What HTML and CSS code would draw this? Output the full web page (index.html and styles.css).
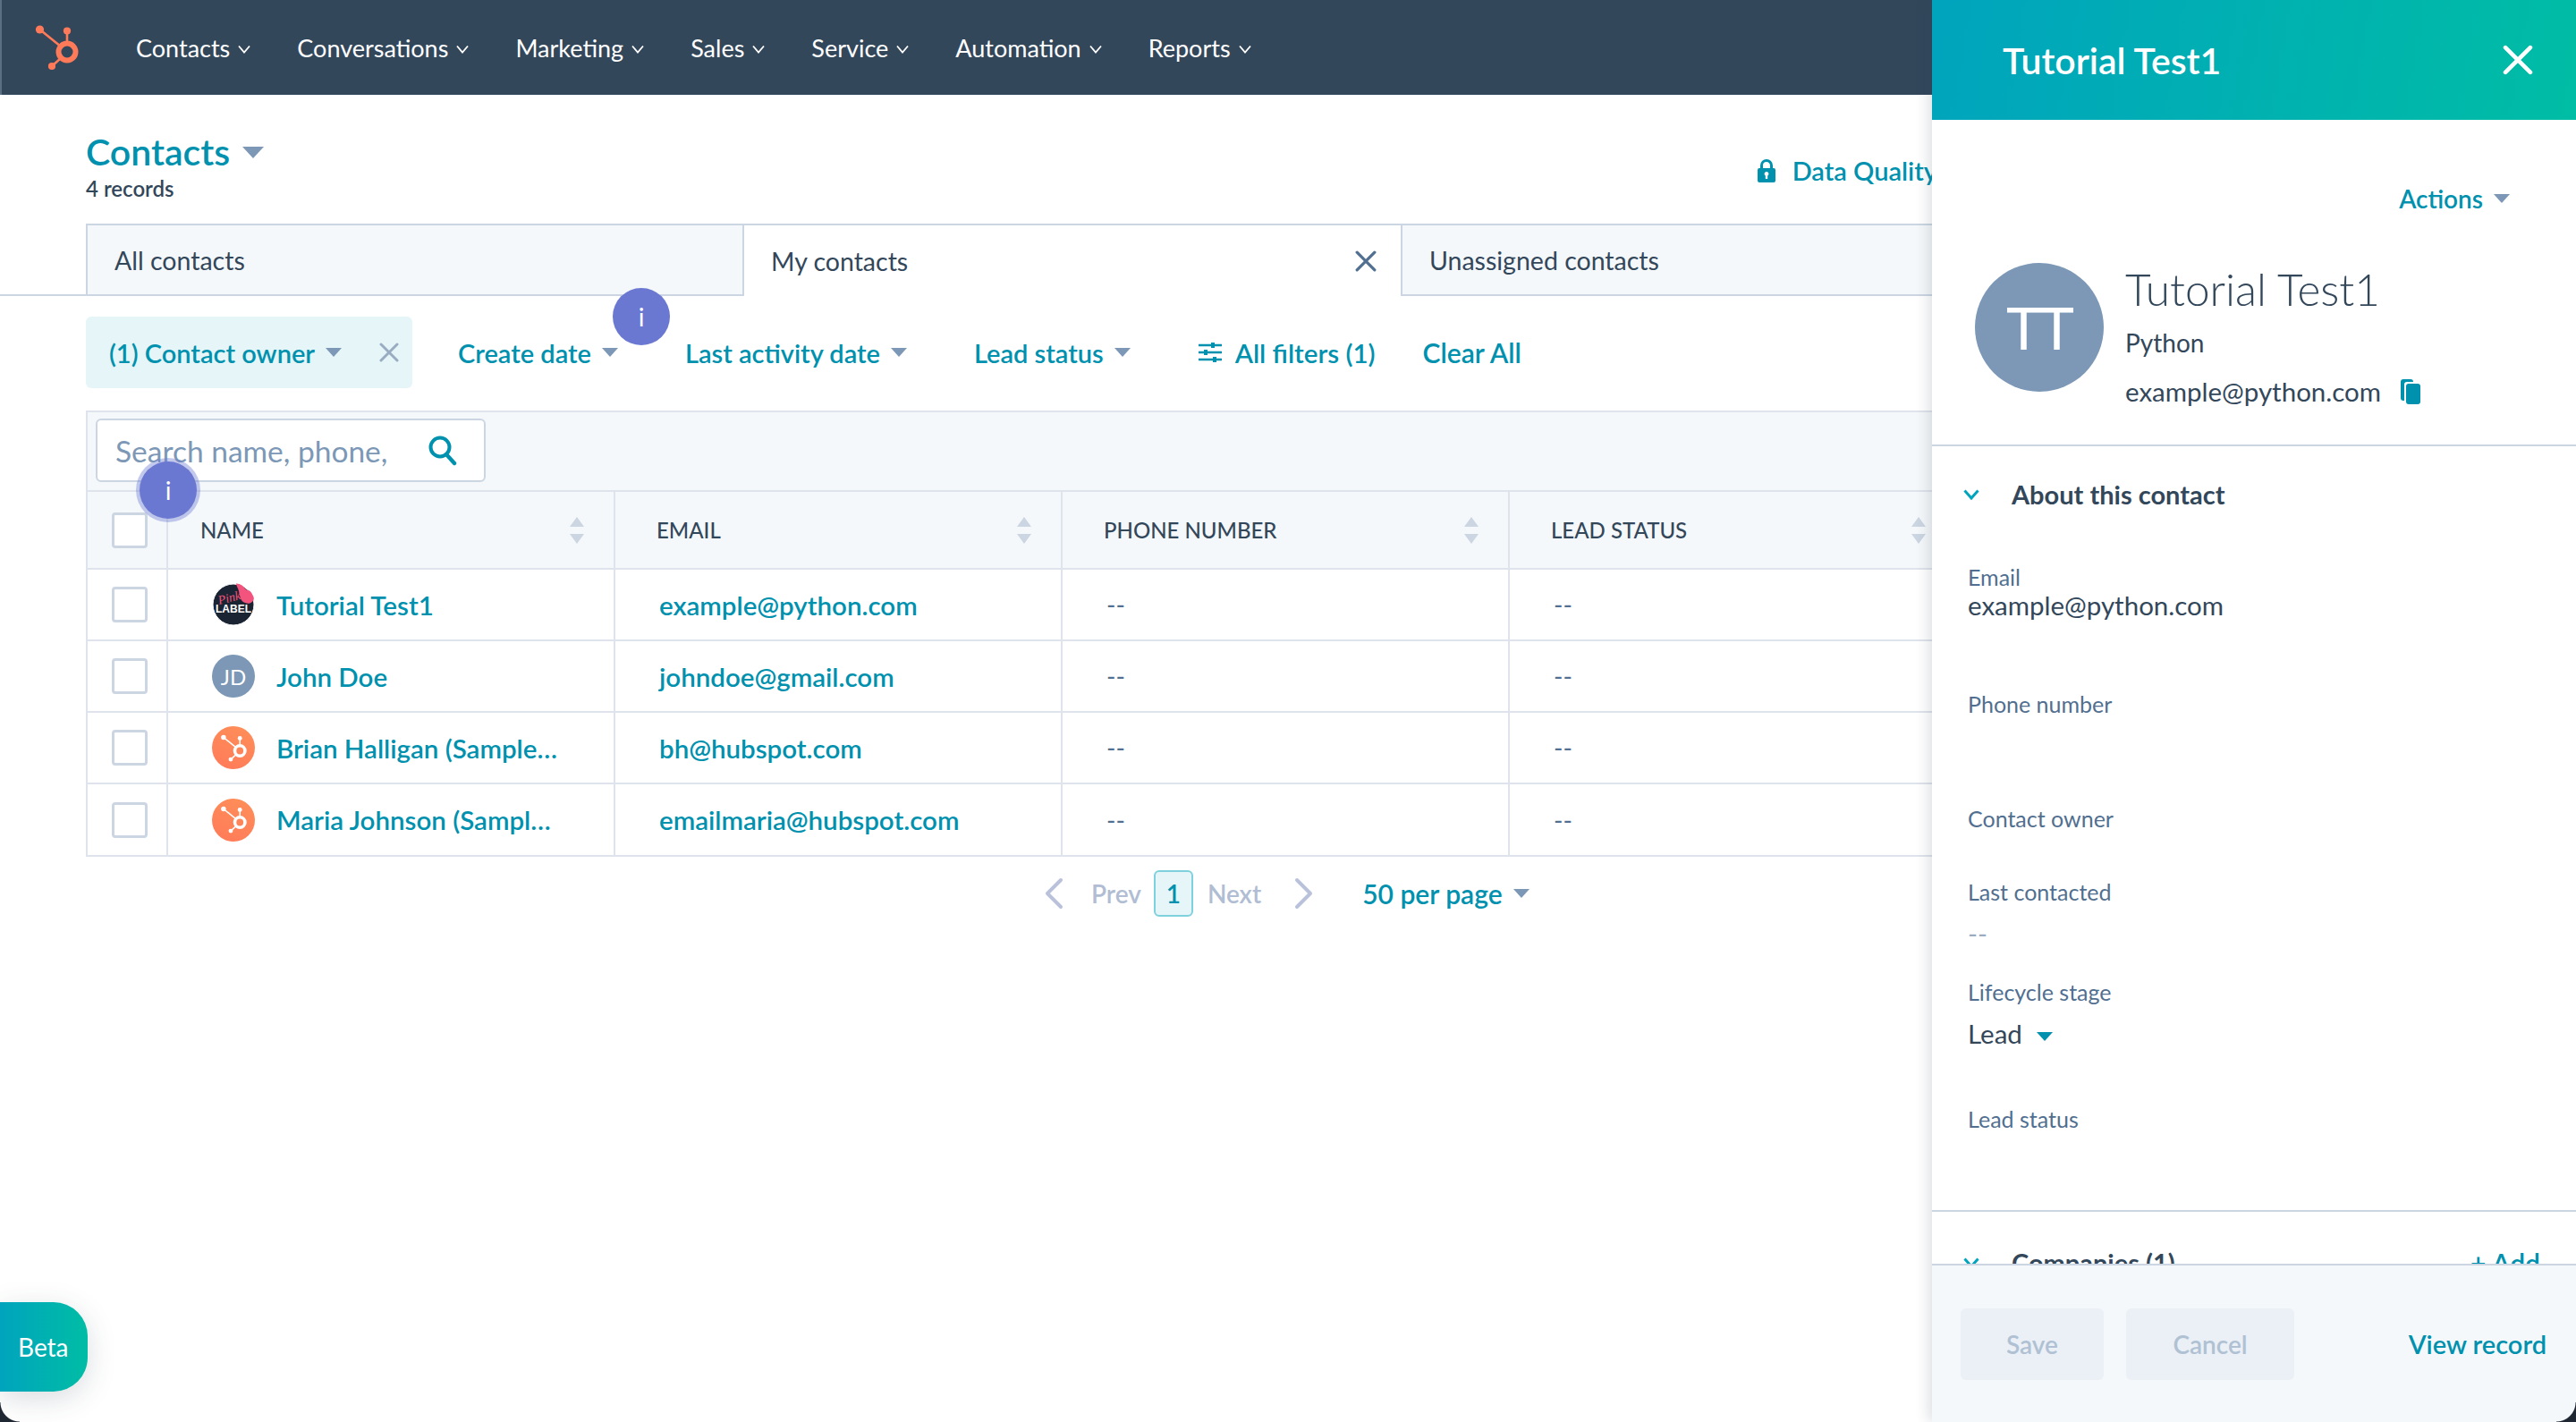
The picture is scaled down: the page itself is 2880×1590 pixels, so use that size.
FILE: index.html
```html
<!DOCTYPE html>
<html lang="en">
<head>
    <meta charset="UTF-8">
    <title>Contacts</title>
    <link rel="stylesheet" href="styles.css">
</head>
<body>
    <svg class="icon-defs" xmlns="http://www.w3.org/2000/svg">
        <symbol id="sprocket" viewBox="38 28 50 54">
            <circle cx="75" cy="60" r="9.5" fill="none" stroke="currentColor" stroke-width="6"/>
            <circle cx="44.5" cy="35" r="4.6" fill="currentColor"/>
            <circle cx="75" cy="36.5" r="4.1" fill="currentColor"/>
            <circle cx="58" cy="76" r="4.1" fill="currentColor"/>
            <path d="M44.5 35 L68 54 M75 36.5 V52 M58 76 L68 67" fill="none" stroke="currentColor" stroke-width="2.6"/>
        </symbol>
        <symbol id="chevron" viewBox="0 0 14 10">
            <path d="M1 1.5 L7 8.5 L13 1.5" fill="none" stroke="currentColor" stroke-width="1.8"/>
        </symbol>
        <symbol id="chevron-bold" viewBox="0 0 18 12">
            <path d="M1.5 1.5 L9 10 L16.5 1.5" fill="none" stroke="currentColor" stroke-width="3"/>
        </symbol>
        <symbol id="close" viewBox="0 0 22 22">
            <path d="M2 2 L20 20 M20 2 L2 20" fill="none" stroke="currentColor" stroke-width="3" stroke-linecap="round"/>
        </symbol>
        <symbol id="sort" viewBox="0 0 16 30">
            <path d="M8 0 L16 11 H0 Z M0 19 H16 L8 30 Z" fill="currentColor"/>
        </symbol>
    </svg>

    <div class="window">
        <nav class="topnav">
            <svg class="nav-logo"><use href="#sprocket"/></svg>
            <a class="nav-item">Contacts<svg class="nav-chevron"><use href="#chevron"/></svg></a>
            <a class="nav-item">Conversations<svg class="nav-chevron"><use href="#chevron"/></svg></a>
            <a class="nav-item">Marketing<svg class="nav-chevron"><use href="#chevron"/></svg></a>
            <a class="nav-item">Sales<svg class="nav-chevron"><use href="#chevron"/></svg></a>
            <a class="nav-item">Service<svg class="nav-chevron"><use href="#chevron"/></svg></a>
            <a class="nav-item">Automation<svg class="nav-chevron"><use href="#chevron"/></svg></a>
            <a class="nav-item">Reports<svg class="nav-chevron"><use href="#chevron"/></svg></a>
        </nav>

        <header class="page-head">
            <div>
                <h1 class="page-title">Contacts<span class="caret caret-lg"></span></h1>
                <div class="record-count">4 records</div>
            </div>
            <a class="data-quality">
                <svg class="lock-icon" viewBox="0 0 20 26">
                    <path d="M4.5 11 V7 a5.5 5.5 0 0 1 11 0 V11" fill="none" stroke="currentColor" stroke-width="3"/>
                    <path d="M2 10 H18 a2 2 0 0 1 2 2 V24 a2 2 0 0 1 -2 2 H2 a2 2 0 0 1 -2 -2 V12 a2 2 0 0 1 2 -2 Z M10 14 a2.4 2.4 0 0 0 -1.2 4.5 V22 H11.2 V18.5 A2.4 2.4 0 0 0 10 14 Z" fill="currentColor" fill-rule="evenodd"/>
                </svg>
                Data Quality
            </a>
        </header>

        <div class="view-tabs">
            <div class="view-tab">All contacts</div>
            <div class="view-tab view-tab-active">My contacts<svg class="tab-close"><use href="#close"/></svg></div>
            <div class="view-tab">Unassigned contacts</div>
        </div>

        <div class="filter-bar">
            <div class="filter-chip">(1) Contact owner<span class="caret"></span><svg class="chip-close"><use href="#close"/></svg></div>
            <a class="filter-item">Create date<span class="caret"></span></a>
            <a class="filter-item">Last activity date<span class="caret"></span></a>
            <a class="filter-item">Lead status<span class="caret"></span></a>
            <a class="filter-item filter-all">
                <svg class="sliders-icon" viewBox="0 0 26 24">
                    <path d="M0 4 H26 M0 12 H26 M0 20 H26" stroke="currentColor" stroke-width="2.4"/>
                    <path d="M14 1 H18 V7 H14 Z M6 9 H10 V15 H6 Z M16 17 H20 V23 H16 Z" fill="currentColor"/>
                </svg>
                All filters (1)
            </a>
            <a class="filter-item filter-clear">Clear All</a>
        </div>

        <section class="contacts-table-wrap">
            <div class="table-toolbar">
                <div class="search-box">
                    <span class="search-text">Search name, phone,</span>
                    <svg class="search-icon" viewBox="0 0 32 34">
                        <circle cx="13" cy="13" r="10.5" fill="none" stroke="currentColor" stroke-width="4"/>
                        <path d="M20 21 L29 31" stroke="currentColor" stroke-width="4.4" stroke-linecap="round"/>
                    </svg>
                </div>
            </div>
            <table class="contacts-table">
                <thead>
                    <tr>
                        <th class="col-check"><span class="checkbox"></span></th>
                        <th class="col-name">NAME<svg class="sort-icon"><use href="#sort"/></svg></th>
                        <th>EMAIL<svg class="sort-icon"><use href="#sort"/></svg></th>
                        <th>PHONE NUMBER<svg class="sort-icon"><use href="#sort"/></svg></th>
                        <th>LEAD STATUS<svg class="sort-icon"><use href="#sort"/></svg></th>
                    </tr>
                </thead>
                <tbody>
                    <tr>
                        <td class="col-check"><span class="checkbox"></span></td>
                        <td>
                            <div class="name-cell">
                                <svg class="avatar" viewBox="0 0 48 48">
                                    <circle cx="24" cy="24" r="23" fill="#1b2433" stroke="#ffffff" stroke-width="1"/>
                                    <path d="M27 0 C34 1 36 5 39 8 C45 8 48 12 47 17 C46 22 41 24 37 22 C32 21 31 14 30 9 C29 5 27 3 27 0 Z" fill="#f2547d"/>
                                    <text class="logo-script" x="8" y="24" transform="rotate(-14 8 24)">Pink</text>
                                    <text class="logo-label" x="24" y="33">LABEL</text>
                                </svg>
                                <a class="row-link">Tutorial Test1</a>
                            </div>
                        </td>
                        <td><a class="row-link">example@python.com</a></td>
                        <td class="cell-empty">--</td>
                        <td class="cell-empty">--</td>
                    </tr>
                    <tr>
                        <td class="col-check"><span class="checkbox"></span></td>
                        <td>
                            <div class="name-cell">
                                <span class="avatar avatar-initials">JD</span>
                                <a class="row-link">John Doe</a>
                            </div>
                        </td>
                        <td><a class="row-link">johndoe@gmail.com</a></td>
                        <td class="cell-empty">--</td>
                        <td class="cell-empty">--</td>
                    </tr>
                    <tr>
                        <td class="col-check"><span class="checkbox"></span></td>
                        <td>
                            <div class="name-cell">
                                <span class="avatar avatar-hs"><svg class="avatar-sprocket"><use href="#sprocket"/></svg></span>
                                <a class="row-link">Brian Halligan (Sample…</a>
                            </div>
                        </td>
                        <td><a class="row-link">bh@hubspot.com</a></td>
                        <td class="cell-empty">--</td>
                        <td class="cell-empty">--</td>
                    </tr>
                    <tr>
                        <td class="col-check"><span class="checkbox"></span></td>
                        <td>
                            <div class="name-cell">
                                <span class="avatar avatar-hs"><svg class="avatar-sprocket"><use href="#sprocket"/></svg></span>
                                <a class="row-link">Maria Johnson (Sampl…</a>
                            </div>
                        </td>
                        <td><a class="row-link">emailmaria@hubspot.com</a></td>
                        <td class="cell-empty">--</td>
                        <td class="cell-empty">--</td>
                    </tr>
                </tbody>
            </table>
        </section>

        <div class="pagination">
            <svg class="page-arrow" viewBox="0 0 22 36"><path d="M19 3 L4 18 L19 33" fill="none" stroke="currentColor" stroke-width="4" stroke-linecap="round" stroke-linejoin="round"/></svg>
            <span class="page-word page-prev">Prev</span>
            <span class="page-current">1</span>
            <span class="page-word page-next">Next</span>
            <svg class="page-arrow" viewBox="0 0 22 36"><path d="M3 3 L18 18 L3 33" fill="none" stroke="currentColor" stroke-width="4" stroke-linecap="round" stroke-linejoin="round"/></svg>
            <a class="per-page">50 per page<span class="caret"></span></a>
        </div>

        <span class="hint-bubble hint-filter">i</span>
        <span class="hint-bubble hint-table">i</span>

        <div class="beta-tab">Beta</div>

        <aside class="side-panel">
            <div class="panel-header">
                <span class="panel-title">Tutorial Test1</span>
                <svg class="panel-close"><use href="#close"/></svg>
            </div>
            <div class="panel-body">
                <div class="panel-actions"><a class="actions-link">Actions<span class="caret"></span></a></div>
                <div class="profile">
                    <div class="profile-avatar">TT</div>
                    <div>
                        <div class="profile-name">Tutorial Test1</div>
                        <div class="profile-company">Python</div>
                        <div class="profile-email">
                            example@python.com
                            <svg class="copy-icon" viewBox="0 0 22 28">
                                <path d="M4 24 H3 a3 3 0 0 1 -3 -3 V3 a3 3 0 0 1 3 -3 H11 a3 3 0 0 1 3 3 H7 a3 3 0 0 0 -3 3 Z" fill="currentColor"/>
                                <rect x="6" y="5" width="16" height="23" rx="3" fill="currentColor"/>
                            </svg>
                        </div>
                    </div>
                </div>
                <div class="section-head about-head">
                    <svg class="section-chevron"><use href="#chevron-bold"/></svg>
                    About this contact
                </div>
                <div class="fields">
                    <div class="field field-142">
                        <div class="field-label">Email</div>
                        <div class="field-value">example@python.com</div>
                    </div>
                    <div class="field field-128">
                        <div class="field-label">Phone number</div>
                    </div>
                    <div class="field field-82">
                        <div class="field-label">Contact owner</div>
                    </div>
                    <div class="field field-112">
                        <div class="field-label">Last contacted</div>
                        <div class="field-value field-gap field-muted">--</div>
                    </div>
                    <div class="field field-142">
                        <div class="field-label">Lifecycle stage</div>
                        <div class="field-value field-gap">Lead<span class="caret caret-teal"></span></div>
                    </div>
                    <div class="field field-118">
                        <div class="field-label">Lead status</div>
                    </div>
                </div>
                <div class="section-head companies-head">
                    <svg class="section-chevron"><use href="#chevron-bold"/></svg>
                    Companies (1)
                    <a class="add-link">+ Add</a>
                </div>
            </div>
            <div class="panel-footer">
                <button class="btn-disabled btn-save">Save</button>
                <button class="btn-disabled btn-cancel">Cancel</button>
                <a class="view-record">View record</a>
            </div>
        </aside>

        <span class="window-corner corner-left"></span>
        <span class="window-corner corner-right"></span>
    </div>
</body>
</html>
```

FILE: styles.css
```css
:root {
    --teal: #0091ae;
    --dark: #33475b;
    --slate: #516f90;
    --caret: #7c98b6;
    --line: #dfe3eb;
    --line-dark: #cbd6e2;
    --soft-bg: #f5f8fa;
    --purple: #6a78d1;
}

html, body {
    margin: 0;
    height: 100%;
}

body {
    font-family: 'Lato', 'Liberation Sans', sans-serif;
    color: var(--dark);
    background: #ffffff;
    overflow: hidden;
}

a {
    color: var(--teal);
}

.icon-defs {
    display: none;
}

.window {
    position: relative;
    width: 2880px;
    height: 1590px;
    overflow: hidden;
    background: #ffffff;
}

/* top navigation */
.topnav {
    display: flex;
    align-items: center;
    gap: 52px;
    height: 106px;
    padding-left: 36px;
    background: #33475b;
    border-left: 2px solid #5b6f83;
    box-sizing: border-box;
}

.nav-logo {
    width: 50px;
    height: 54px;
    margin-right: 12px;
    color: #ff7a59;
}

.nav-item {
    display: flex;
    align-items: center;
    color: #ffffff;
    font-size: 27px;
}

.nav-chevron {
    width: 14px;
    height: 10px;
    margin: 4px 0 0 9px;
    color: #ffffff;
}

/* page heading */
.page-head {
    display: flex;
    justify-content: space-between;
    width: 2070px;
    margin-left: 96px;
    padding-top: 40px;
}

.page-title {
    display: flex;
    align-items: center;
    margin: 0;
    font-size: 41px;
    line-height: 48px;
    font-weight: 600;
    color: var(--teal);
}

.record-count {
    margin-top: 2px;
    font-size: 24px;
    line-height: 30px;
    font-weight: 600;
}

.data-quality {
    display: flex;
    align-items: center;
    align-self: flex-start;
    gap: 19px;
    margin-top: 27px;
    font-size: 29px;
    font-weight: 600;
}

.lock-icon {
    width: 20px;
    height: 26px;
}

.caret {
    display: inline-block;
    width: 0;
    height: 0;
    margin-left: 12px;
    border-left: 9px solid transparent;
    border-right: 9px solid transparent;
    border-top: 10px solid var(--caret);
}

.caret-lg {
    margin-left: 14px;
    border-left-width: 12px;
    border-right-width: 12px;
    border-top-width: 13px;
}

.caret-teal {
    margin-left: 16px;
    border-top-color: var(--teal);
    vertical-align: 3px;
}

/* saved view tabs */
.view-tabs {
    display: flex;
    height: 79px;
    margin-top: 24px;
    padding-left: 96px;
    border-bottom: 2px solid var(--line-dark);
}

.view-tab {
    display: flex;
    align-items: center;
    flex: none;
    box-sizing: border-box;
    width: 736px;
    height: 79px;
    padding: 0 30px;
    font-size: 28.5px;
    background: var(--soft-bg);
    border: 2px solid var(--line-dark);
    border-bottom: none;
    border-left: none;
}

.view-tab:first-child {
    border-left: 2px solid var(--line-dark);
}

.view-tab-active {
    height: 81px;
    background: #ffffff;
    justify-content: space-between;
    border-right-width: 2px;
}

.tab-close {
    width: 24px;
    height: 24px;
    margin-right: -3px;
    color: #516f90;
}

/* filters */
.filter-bar {
    display: flex;
    align-items: center;
    gap: 75px;
    height: 80px;
    margin: 23px 0 25px 96px;
    font-size: 29px;
    font-weight: 600;
}

.filter-chip {
    display: flex;
    align-items: center;
    box-sizing: border-box;
    width: 365px;
    height: 80px;
    margin-right: -24px;
    padding: 0 15px 0 26px;
    color: var(--teal);
    background: #e5f5f8;
    border-radius: 6px;
}

.chip-close {
    width: 22px;
    height: 22px;
    margin-left: auto;
    color: #99acc2;
}

.filter-item {
    display: flex;
    align-items: center;
}

.filter-all {
    gap: 15px;
    margin-left: 1px;
    font-size: 29.5px;
}

.filter-clear {
    margin-left: -22px;
    font-size: 30px;
}

.sliders-icon {
    width: 26px;
    height: 24px;
}

/* contacts table */
.contacts-table-wrap {
    width: 2200px;
    margin-left: 96px;
    border-left: 2px solid var(--line);
    box-sizing: border-box;
}

.table-toolbar {
    box-sizing: border-box;
    height: 89px;
    padding: 7px 0 0 9px;
    background: var(--soft-bg);
    border-top: 2px solid var(--line);
}

.search-box {
    display: flex;
    align-items: center;
    justify-content: space-between;
    box-sizing: border-box;
    width: 436px;
    height: 71px;
    padding: 0 30px 0 20px;
    background: #ffffff;
    border: 2px solid var(--line-dark);
    border-radius: 6px;
}

.search-text {
    font-size: 33.5px;
    color: var(--caret);
}

.search-icon {
    width: 32px;
    height: 34px;
    color: var(--teal);
}

.contacts-table {
    table-layout: fixed;
    width: 2090px;
    border-collapse: separate;
    border-spacing: 0;
}

.contacts-table th,
.contacts-table td {
    box-sizing: border-box;
    width: 500px;
    padding: 0 0 0 49px;
    border-right: 2px solid var(--line);
    border-bottom: 2px solid var(--line);
    text-align: left;
}

.contacts-table th {
    position: relative;
    height: 89px;
    padding-left: 46px;
    font-size: 24px;
    font-weight: 500;
    background: var(--soft-bg);
    border-top: 2px solid var(--line);
}

.contacts-table td {
    height: 80px;
    font-size: 28px;
}

.contacts-table tbody tr:last-child td {
    height: 81px;
}

.contacts-table .col-check {
    width: 90px;
    padding: 0 0 0 27px;
}

.contacts-table .col-name {
    padding-left: 36px;
}

.name-cell {
    display: flex;
    align-items: center;
    gap: 24px;
    white-space: nowrap;
}

.checkbox {
    display: block;
    box-sizing: border-box;
    width: 40px;
    height: 40px;
    background: #ffffff;
    border: 3px solid var(--line-dark);
    border-radius: 4px;
}

.sort-icon {
    position: absolute;
    top: 28px;
    right: 33px;
    width: 16px;
    height: 30px;
    color: var(--line-dark);
}

.row-link {
    font-size: 29.5px;
    font-weight: 600;
}

.cell-empty {
    color: var(--slate);
}

.avatar {
    display: inline-flex;
    align-items: center;
    justify-content: center;
    flex: none;
    width: 48px;
    height: 48px;
    border-radius: 50%;
}

.avatar-initials {
    color: #ffffff;
    background: #7c98b6;
    font-size: 24px;
}

.avatar-hs {
    color: #ffffff;
    background: linear-gradient(20deg, #ff7a59, #ff8f59);
}

.avatar-sprocket {
    width: 30px;
    height: 33px;
}

.logo-script {
    font-family: 'Liberation Serif', serif;
    font-style: italic;
    font-size: 14px;
    fill: #f2547d;
}

.logo-label {
    font-family: 'Liberation Sans', sans-serif;
    font-weight: 700;
    font-size: 12px;
    fill: #ffffff;
    text-anchor: middle;
}

/* pagination */
.pagination {
    display: flex;
    align-items: center;
    height: 52px;
    margin: 15px 0 0 1167px;
    font-size: 28px;
    font-weight: 600;
}

.page-arrow {
    width: 22px;
    height: 36px;
    color: #b9c2da;
}

.page-word {
    color: #b0bdd3;
}

.page-prev {
    margin: 0 14px 0 31px;
}

.page-next {
    margin: 0 37px 0 16px;
}

.page-current {
    box-sizing: border-box;
    width: 44px;
    height: 52px;
    color: var(--teal);
    line-height: 48px;
    text-align: center;
    background: #e5f5f8;
    border: 2px solid #7fd1de;
    border-radius: 6px;
}

.per-page {
    display: flex;
    align-items: center;
    margin-left: 54px;
    font-size: 30px;
}

/* onboarding markers */
.hint-bubble {
    position: absolute;
    width: 64px;
    height: 64px;
    color: #ffffff;
    font-size: 28px;
    line-height: 64px;
    text-align: center;
    background: var(--purple);
    border-radius: 50%;
}

.hint-filter {
    top: 322px;
    left: 685px;
}

.hint-table {
    top: 516px;
    left: 156px;
    box-shadow: 0 0 0 4px rgba(106, 120, 209, 0.4);
}

.beta-tab {
    position: absolute;
    top: 1456px;
    left: 0;
    box-sizing: border-box;
    width: 98px;
    height: 100px;
    color: #ffffff;
    font-size: 28px;
    line-height: 100px;
    padding-left: 20px;
    background: linear-gradient(90deg, #00a4bd, #00bda5);
    border-radius: 0 38px 38px 0;
    box-shadow: 0 8px 32px rgba(45, 62, 80, 0.18);
}

/* record side panel */
.side-panel {
    position: absolute;
    top: 0;
    right: 0;
    bottom: 0;
    display: flex;
    flex-direction: column;
    width: 720px;
    background: #ffffff;
    box-shadow: -4px 0 14px rgba(45, 62, 80, 0.16);
}

.panel-header {
    display: flex;
    align-items: center;
    justify-content: space-between;
    flex: none;
    height: 134px;
    padding: 0 48px 0 79px;
    box-sizing: border-box;
    color: #ffffff;
    background: linear-gradient(100deg, #00a4bd, #00bda5);
}

.panel-title {
    font-size: 41px;
    font-weight: 600;
}

.panel-close {
    width: 34px;
    height: 34px;
    color: #ffffff;
}

.panel-body {
    flex: 1;
    min-height: 0;
    overflow: hidden;
}

.panel-actions {
    display: flex;
    justify-content: flex-end;
    padding: 70px 74px 0 0;
}

.actions-link {
    display: flex;
    align-items: center;
    font-size: 28px;
    line-height: 36px;
    font-weight: 600;
}

.profile {
    display: flex;
    gap: 24px;
    margin-top: 53px;
    padding: 0 0 41px 48px;
    border-bottom: 2px solid var(--line-dark);
}

.profile-avatar {
    flex: none;
    width: 144px;
    height: 144px;
    margin-top: 1px;
    color: #ffffff;
    font-size: 66px;
    letter-spacing: -2px;
    line-height: 144px;
    text-align: center;
    background: #7c98b6;
    border-radius: 50%;
}

.profile-name {
    font-size: 49.5px;
    font-weight: 300;
    line-height: 60px;
}

.profile-company {
    margin-top: 12px;
    font-size: 28px;
    line-height: 36px;
}

.profile-email {
    display: flex;
    align-items: center;
    gap: 22px;
    margin-top: 19px;
    font-size: 29.5px;
    line-height: 36px;
}

.copy-icon {
    width: 22px;
    height: 28px;
    color: var(--teal);
}

.section-head {
    display: flex;
    align-items: center;
    padding-left: 35px;
    font-size: 29px;
    font-weight: 700;
    line-height: 36px;
}

.about-head {
    margin-top: 36px;
}

.companies-head {
    margin-top: 39px;
}

.section-chevron {
    width: 18px;
    height: 12px;
    margin-right: 36px;
    color: #00a4bd;
}

.add-link {
    margin-left: auto;
    padding-right: 40px;
    font-size: 30px;
    font-weight: 600;
}

.fields {
    margin-top: 58px;
    padding-left: 40px;
    border-bottom: 2px solid var(--line-dark);
}

.field-label {
    font-size: 25px;
    line-height: 32px;
    color: var(--slate);
}

.field-value {
    font-size: 29.5px;
    line-height: 32px;
}

.field-gap {
    margin-top: 15px;
}

.field-muted {
    color: #99acc2;
}

.field-142 { height: 142px; }
.field-128 { height: 128px; }
.field-118 { height: 118px; }
.field-112 { height: 112px; }
.field-82 { height: 82px; }

.panel-footer {
    display: flex;
    align-items: center;
    flex: none;
    box-sizing: border-box;
    height: 177px;
    padding: 0 33px 0 32px;
    background: var(--soft-bg);
    border-top: 2px solid var(--line-dark);
}

.btn-disabled {
    height: 80px;
    padding: 0;
    color: #b0c1d4;
    font-family: inherit;
    font-size: 28px;
    font-weight: 600;
    background: #eaf0f6;
    border: none;
    border-radius: 6px;
}

.btn-save {
    width: 160px;
    margin-right: 25px;
}

.btn-cancel {
    width: 188px;
}

.view-record {
    margin-left: auto;
    font-size: 29px;
    font-weight: 600;
}

/* rounded window corners */
.window-corner {
    position: absolute;
    bottom: 0;
    width: 22px;
    height: 22px;
}

.corner-left {
    left: 0;
    background: radial-gradient(circle at 100% 0, transparent 21px, #1f2733 22px);
}

.corner-right {
    right: 0;
    background: radial-gradient(circle at 0 0, transparent 21px, #1f2733 22px);
}
```
